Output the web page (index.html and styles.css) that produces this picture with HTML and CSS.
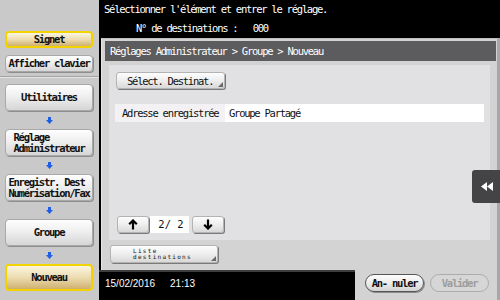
FILE: index.html
```html
<!DOCTYPE html>
<html>
<head>
<meta charset="utf-8">
<link rel="stylesheet" href="styles.css">
</head>
<body>
<div class="screen">
	<div class="side">
		<div class="sbtn short sel"><span>Signet</span></div>
		<div class="sbtn short gap"><span>Afficher clavier</span></div>
		<div class="divider"></div>
		<div class="sbtn"><span>Utilitaires</span></div>
		<div class="down"><svg width="7" height="7" viewBox="0 0 7 7"><polygon points="2,0 5,0 5,3 7,3 3.5,7 0,3 2,3" fill="#1f5fe8"/></svg></div>
		<div class="sbtn"><span>Réglage<br>Administrateur</span></div>
		<div class="down"><svg width="7" height="7" viewBox="0 0 7 7"><polygon points="2,0 5,0 5,3 7,3 3.5,7 0,3 2,3" fill="#1f5fe8"/></svg></div>
		<div class="sbtn"><span>Enregistr. Dest<br>Numérisation/Fax</span></div>
		<div class="down"><svg width="7" height="7" viewBox="0 0 7 7"><polygon points="2,0 5,0 5,3 7,3 3.5,7 0,3 2,3" fill="#1f5fe8"/></svg></div>
		<div class="sbtn"><span>Groupe</span></div>
		<div class="down"><svg width="7" height="7" viewBox="0 0 7 7"><polygon points="2,0 5,0 5,3 7,3 3.5,7 0,3 2,3" fill="#1f5fe8"/></svg></div>
		<div class="sbtn sel"><span>Nouveau</span></div>
	</div>

	<div class="main">
		<div class="msg">
			<div class="msg1">Sélectionner l'élément et entrer le réglage.</div>
			<div class="msg2">N° de destinations :&nbsp;&nbsp;&nbsp;000</div>
		</div>

		<div class="panel">
			<div class="crumb">Réglages Administrateur &gt; Groupe &gt; Nouveau</div>

			<div class="inner">
				<div class="btn pick">Sélect. Destinat.<i class="corner"></i></div>
				<div class="row">
					<div class="lbl">Adresse enregistrée</div>
					<div class="val">Groupe Partagé</div>
				</div>
				<div class="pager">
					<div class="btn arrow"><svg width="10" height="11" viewBox="0 0 10 11"><path d="M5 10.5V1.5M1.2 5.3L5 1.5l3.8 3.8" fill="none" stroke="#000" stroke-width="2.2"/></svg></div>
					<div class="page">2/ 2</div>
					<div class="btn arrow"><svg width="10" height="11" viewBox="0 0 10 11"><path d="M5 0.5V9.5M1.2 5.7L5 9.5l3.8-3.8" fill="none" stroke="#000" stroke-width="2.2"/></svg></div>
				</div>
			</div>

			<div class="btn list"><span>Liste<br>destinations</span><i class="corner"></i></div>

			<div class="foot">
				<div class="clock"><span>15/02/2016</span><span>21:13</span></div>
				<div class="actions">
					<div class="pill">An- nuler</div>
					<div class="pill off">Valider</div>
				</div>
			</div>

			<div class="tab"><svg width="12" height="9" viewBox="0 0 12 9"><polygon points="6,0 6,9 0,4.5" fill="#fff"/><polygon points="12,0 12,9 6,4.5" fill="#fff"/></svg></div>
		</div>
	</div>
</div>
</body>
</html>
```

FILE: styles.css
```css
body{
	margin: 0;
	background: #000;
	font-family: "DejaVu Sans Mono", "Liberation Mono", monospace;
	font-size: 10.5px;
	letter-spacing: -1.25px;
	color: #111;
}
.screen{
	display: flex;
	width: 500px;
	height: 300px;
	overflow: hidden;
}

/* left column */
.side{
	width: 99px;
	flex: none;
	box-sizing: border-box;
	padding-top: 31px;
	background: #c9c9c9;
	display: flex;
	flex-direction: column;
}
.sbtn{
	margin-left: 5px;
	width: 88px;
	height: 27px;
	box-sizing: border-box;
	border: 1px solid #a8a8a8;
	border-radius: 4px;
	background: linear-gradient(#fefefe, #efefef 45%, #d6d6d6);
	box-shadow: 1px 1px 0 #8e8e8e;
	display: flex;
	align-items: center;
	justify-content: center;
	font-weight: bold;
	line-height: 11px;
}
.sbtn span{text-align: left;}
.sbtn.short{height: 17px;}
.sbtn.gap{margin-top: 7px;}
.sbtn.sel{
	border: 2px solid #f2d300;
	background: linear-gradient(#fbf5e0, #ecdcb0 50%, #cfb070);
	box-shadow: none;
}
.divider{
	margin: 4px 0 6px;
	height: 0;
	border-top: 1px solid #a3a3a3;
	border-bottom: 1px solid #e4e4e4;
}
.down{
	height: 18px;
	display: flex;
	align-items: center;
	justify-content: center;
}

/* right part */
.main{
	flex: 1;
	display: flex;
	flex-direction: column;
}
.msg{
	height: 38px;
	flex: none;
	color: #fff;
}
.msg1{padding: 3px 0 0 5px; line-height: 12px;}
.msg2{padding: 7px 0 0 37px; line-height: 12px;}

.panel{
	position: relative;
	height: 262px;
	box-sizing: border-box;
	margin-left: 2px;
	background: #d3d3d3;
	border-top: 1px solid #bcbcbc;
	border-left: 1px solid #e6e6e6;
	border-right: 3px solid #a7a7a7;
	display: flex;
	flex-direction: column;
}
.crumb{
	margin: 2px 1px 0 3px;
	height: 20px;
	line-height: 20px;
	padding-left: 5px;
	background: #5c5b5e;
	color: #fff;
}
.inner{
	margin: 4px 7px 0 7px;
	height: 175px;
	box-sizing: border-box;
	padding: 7px 6px 7px 6px;
	background: #e1e0e3;
	display: flex;
	flex-direction: column;
}

.btn{
	position: relative;
	box-sizing: border-box;
	border: 1px solid #b3b3b3;
	border-radius: 3px;
	background: linear-gradient(#fdfdfd, #eeeeee 50%, #d9d9d9);
	box-shadow: 1px 1px 0 #7a7a7a;
	display: flex;
	align-items: center;
}
.corner{
	position: absolute;
	right: 1px;
	bottom: 1px;
	width: 0;
	height: 0;
	border-left: 5px solid transparent;
	border-bottom: 5px solid #6a6a6a;
}
.pick{
	margin-left: 1px;
	width: 109px;
	height: 17px;
	padding-left: 10px;
}
.row{
	margin-top: 15px;
	height: 18px;
	display: flex;
	line-height: 18px;
}
.lbl{
	width: 110px;
	padding-left: 7px;
	box-sizing: border-box;
	background: #f3f1f4;
}
.val{
	flex: 1;
	padding-left: 4px;
	background: #fff;
}
.pager{
	margin-top: auto;
	margin-left: 2px;
	display: flex;
	height: 17px;
}
.arrow{
	width: 32px;
	justify-content: center;
}
.page{
	width: 39px;
	margin: 0 3px 0 1px;
	padding-left: 3px;
	box-sizing: border-box;
	background: #fff;
	line-height: 17px;
	text-align: center;
	letter-spacing: 0;
}
.list{
	margin: 5px 0 0 8px;
	width: 108px;
	height: 18px;
	padding-left: 22px;
	font-size: 6px;
	letter-spacing: 1.3px;
	line-height: 6px;
}

.foot{
	margin-top: 7px;
	height: 30px;
	display: flex;
}
.clock{
	margin-left: -3px;
	width: 256px;
	box-sizing: border-box;
	background: #000;
	border-top: 2px solid #3d3d3d;
	color: #fff;
	font-family: "Liberation Sans", Arial, sans-serif;
	font-size: 10px;
	letter-spacing: 0;
	padding: 6px 0 0 6px;
	display: flex;
	gap: 15px;
}
.actions{
	flex: 1;
	display: flex;
	gap: 6px;
	padding: 4px 0 0 10px;
}
.pill{
	width: 59px;
	height: 18px;
	box-sizing: border-box;
	border: 1px solid #555;
	border-radius: 9px;
	background: linear-gradient(#fdfdfd, #ececec 50%, #d4d4d4);
	box-shadow: 1px 1px 0 #8a8a8a;
	text-align: center;
	line-height: 16px;
	font-weight: bold;
}
.pill.off{
	border-color: #acacac;
	background: #d6d6d6;
	box-shadow: none;
	color: #9d9d9d;
}
.tab{
	position: absolute;
	right: -3px;
	top: 131px;
	width: 28px;
	height: 33px;
	border-radius: 3px 0 0 3px;
	background: #444346;
	display: flex;
	align-items: center;
	justify-content: center;
	padding-left: 2px;
	box-sizing: border-box;
}
```
